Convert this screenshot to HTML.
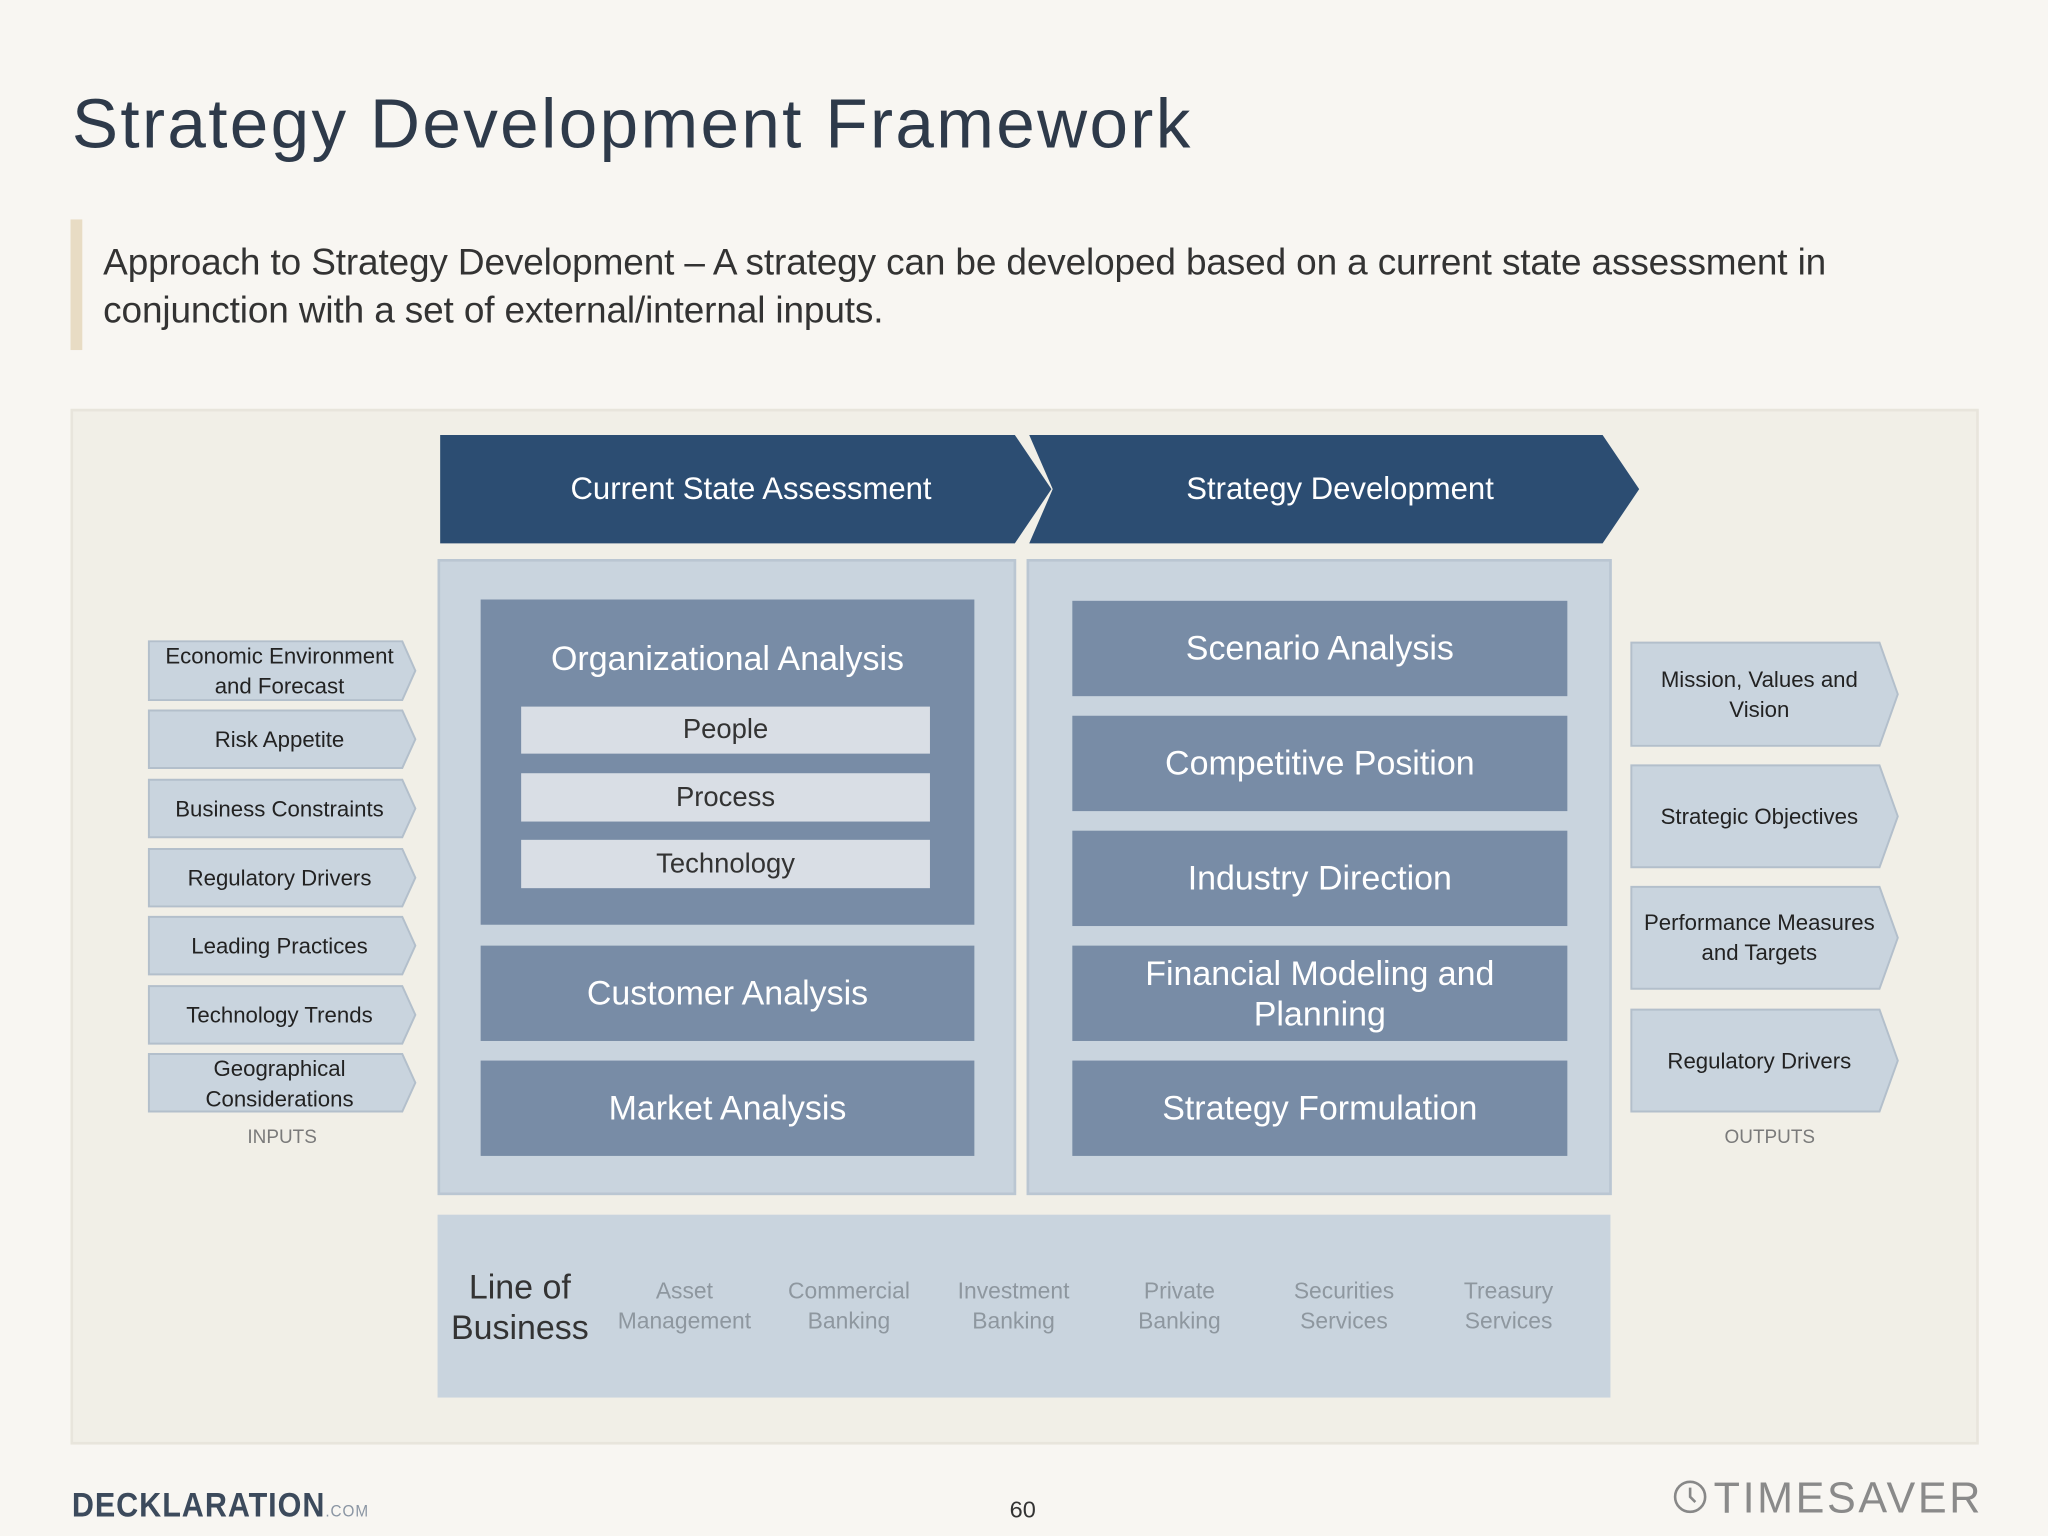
<!DOCTYPE html>
<html><head><meta charset="utf-8"><style>
*{margin:0;padding:0;box-sizing:border-box}
html,body{width:2048px;height:1536px;overflow:hidden;background:#f8f6f2}
#w{position:absolute;left:0;top:0;width:1568px;height:1176px;transform:scale(1.306122);transform-origin:0 0;font-family:"Liberation Sans",Arial,sans-serif}
.a{position:absolute}
.t{display:flex;align-items:center;justify-content:center;text-align:center}
.db{background:#788ca6;color:#fff;font-size:26px;line-height:31px}
.lb{background:#d9dee5;color:#333;font-size:21px}
.lob{color:#8e979f;font-size:17.5px;line-height:23px;text-align:center;width:120px;top:977px}
.in{color:#222;font-size:17px;line-height:23px}
</style></head><body><div id="w">
<div class="a" style="left:55px;top:65px;font-size:53px;color:#2e3a4a;letter-spacing:1.8px">Strategy Development Framework</div>
<div class="a" style="left:54px;top:168px;width:9px;height:100px;background:#e8dcc4"></div>
<div class="a" style="left:79px;top:182px;font-size:28.3px;line-height:37px;color:#333;letter-spacing:-0.1px">Approach to Strategy Development – A strategy can be developed based on a current state assessment in<br>conjunction with a set of external/internal inputs.</div>

<div class="a" style="left:54px;top:313px;width:1461px;height:793px;background:#f1efe7;border:2px solid #e8e5dc"></div>

<svg class="a" style="left:0;top:0" width="1568" height="1176">
<polygon points="337,333 777,333 805,374.5 777,416 337,416" fill="#2c4d72"/>
<polygon points="788,333 1227,333 1255,374.5 1227,416 788,416 806,374.5" fill="#2c4d72"/>
<g fill="#c9d4de" stroke="#b3bfcb" stroke-width="1.5">
<polygon points="114,491 308,491 318,513.5 308,536 114,536"/>
<polygon points="114,544 308,544 318,566 308,588 114,588"/>
<polygon points="114,597 308,597 318,619 308,641 114,641"/>
<polygon points="114,650 308,650 318,672 308,694 114,694"/>
<polygon points="114,702 308,702 318,724 308,746 114,746"/>
<polygon points="114,755 308,755 318,777 308,799 114,799"/>
<polygon points="114,807 308,807 318,829 308,851 114,851"/>
<polygon points="1249,492 1439,492 1453,531.5 1439,571 1249,571"/>
<polygon points="1249,586 1439,586 1453,625 1439,664 1249,664"/>
<polygon points="1249,679 1439,679 1453,718 1439,757 1249,757"/>
<polygon points="1249,773 1439,773 1453,812 1439,851 1249,851"/>
</g>
</svg>
<div class="a t" style="left:337px;top:333px;width:476px;height:83px;color:#fff;font-size:23.8px">Current State Assessment</div>
<div class="a t" style="left:788px;top:333px;width:476px;height:83px;color:#fff;font-size:23.8px">Strategy Development</div>

<div class="a" style="left:335px;top:428px;width:443px;height:487px;background:#c9d4de;border:2px solid #bac6d2"></div>
<div class="a" style="left:786px;top:428px;width:448px;height:487px;background:#c9d4de;border:2px solid #bac6d2"></div>

<div class="a db" style="left:368px;top:459px;width:378px;height:249px"></div>
<div class="a t" style="left:368px;top:486px;width:378px;height:36px;color:#fff;font-size:26px">Organizational Analysis</div>
<div class="a t lb" style="left:399px;top:541px;width:313px;height:36px">People</div>
<div class="a t lb" style="left:399px;top:592px;width:313px;height:37px">Process</div>
<div class="a t lb" style="left:399px;top:643px;width:313px;height:37px">Technology</div>
<div class="a t db" style="left:368px;top:724px;width:378px;height:73px">Customer Analysis</div>
<div class="a t db" style="left:368px;top:812px;width:378px;height:73px">Market Analysis</div>

<div class="a t db" style="left:821px;top:460px;width:379px;height:73px">Scenario Analysis</div>
<div class="a t db" style="left:821px;top:548px;width:379px;height:73px">Competitive Position</div>
<div class="a t db" style="left:821px;top:636px;width:379px;height:73px">Industry Direction</div>
<div class="a t db" style="left:821px;top:724px;width:379px;height:73px">Financial Modeling and<br>Planning</div>
<div class="a t db" style="left:821px;top:812px;width:379px;height:73px">Strategy Formulation</div>

<div class="a t in" style="left:114px;top:491px;width:200px;height:45px">Economic Environment<br>and Forecast</div>
<div class="a t in" style="left:114px;top:544px;width:200px;height:45px">Risk Appetite</div>
<div class="a t in" style="left:114px;top:597px;width:200px;height:44px">Business Constraints</div>
<div class="a t in" style="left:114px;top:650px;width:200px;height:44px">Regulatory Drivers</div>
<div class="a t in" style="left:114px;top:702px;width:200px;height:44px">Leading Practices</div>
<div class="a t in" style="left:114px;top:755px;width:200px;height:44px">Technology Trends</div>
<div class="a t in" style="left:114px;top:807px;width:200px;height:45px">Geographical<br>Considerations</div>
<div class="a t" style="left:116px;top:861px;width:200px;height:20px;font-size:14.5px;color:#7a7a7a">INPUTS</div>

<div class="a t in" style="left:1249px;top:492px;width:196px;height:79px">Mission, Values and<br>Vision</div>
<div class="a t in" style="left:1249px;top:586px;width:196px;height:78px">Strategic Objectives</div>
<div class="a t in" style="left:1249px;top:679px;width:196px;height:78px">Performance Measures<br>and Targets</div>
<div class="a t in" style="left:1249px;top:773px;width:196px;height:78px">Regulatory Drivers</div>
<div class="a t" style="left:1255px;top:861px;width:200px;height:20px;font-size:14.5px;color:#7a7a7a">OUTPUTS</div>

<div class="a" style="left:335px;top:930px;width:898px;height:140px;background:#c9d4de"></div>
<div class="a" style="left:338px;top:970px;width:120px;text-align:center;font-size:26px;line-height:31px;color:#333">Line of<br>Business</div>
<div class="a lob" style="left:464px">Asset<br>Management</div>
<div class="a lob" style="left:590px">Commercial<br>Banking</div>
<div class="a lob" style="left:716px">Investment<br>Banking</div>
<div class="a lob" style="left:843px">Private<br>Banking</div>
<div class="a lob" style="left:969px">Securities<br>Services</div>
<div class="a lob" style="left:1095px">Treasury<br>Services</div>

<div class="a" style="left:55px;top:1137px;font-size:26px;color:#3c4a5c;letter-spacing:0.8px;font-weight:bold;transform:scaleX(0.9);transform-origin:0 0">DECKLARATION<span style="font-size:13px;color:#8a95a3;font-weight:normal">.COM</span></div>
<div class="a" style="left:773px;top:1146px;font-size:18px;color:#333">60</div>
<svg class="a" style="left:1280px;top:1132px" width="28" height="28"><circle cx="14" cy="14" r="11.5" fill="none" stroke="#888" stroke-width="2"/><path d="M14 7v7l4 4" fill="none" stroke="#888" stroke-width="2"/></svg>
<div class="a" style="left:1312px;top:1128px;font-size:33px;color:#8a8a8a;letter-spacing:2px">TIMESAVER</div>
</div></body></html>
